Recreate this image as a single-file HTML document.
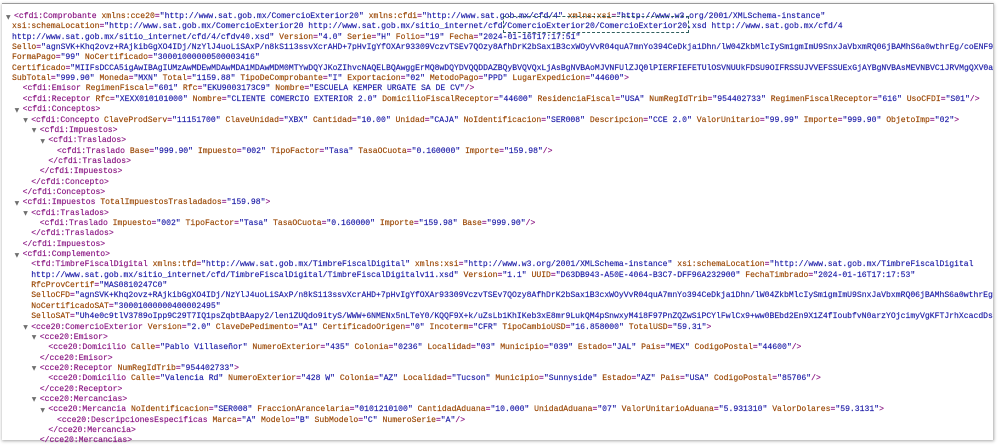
<!DOCTYPE html>
<html><head><meta charset="utf-8"><style>
html,body{margin:0;padding:0;background:#fff;width:1000px;height:445px;overflow:hidden}
#f{position:absolute;left:2px;top:3px;width:991px;height:436px;border-top:1px solid #9a9a9a;border-right:1px solid #c8c8c8;box-shadow:0 1px 3px rgba(0,0,0,.35);overflow:hidden;background:#fff}
.l{position:absolute;white-space:pre;font-family:"Liberation Mono",monospace;font-size:8.1px;line-height:10px;color:#881280;-webkit-text-stroke:0.15px currentColor}
.t{color:#881280}.a{color:#994500}.v{color:#1a1aa6}
.ar{position:absolute;font-size:6px;color:#6e6e6e;font-family:"DejaVu Sans",sans-serif;line-height:10px}
#db{position:absolute;left:503px;top:16px;width:184px;height:15px;border:1.5px dashed #2f5f5f}
</style></head><body><div id="f"></div>
<div id="c"></div>
<script>
var L=[
[0,1,'<span class=t>&lt;cfdi:Comprobante</span> <span class=a>xmlns:cce20</span>=<span class=v>"http://www.sat.gob.mx/ComercioExterior20"</span> <span class=a>xmlns:cfdi</span>=<span class=v>"http://www.sat.gob.mx/cfd/4"</span> <span class=a>xmlns:xsi</span>=<span class=v>"http://www.w3.org/2001/XMLSchema-instance"</span>'],
[0,2,'<span class=a>xsi:schemaLocation</span>=<span class=v>"http://www.sat.gob.mx/ComercioExterior20 http://www.sat.gob.mx/sitio_internet/cfd/ComercioExterior20/ComercioExterior20.xsd http://www.sat.gob.mx/cfd/4</span>'],
[0,2,'<span class=v>http://www.sat.gob.mx/sitio_internet/cfd/4/cfdv40.xsd"</span> <span class=a>Version</span>=<span class=v>"4.0"</span> <span class=a>Serie</span>=<span class=v>"H"</span> <span class=a>Folio</span>=<span class=v>"19"</span> <span class=a>Fecha</span>=<span class=v>"2024-01-16T17:17:51"</span>'],
[0,2,'<span class=a>Sello</span>=<span class=v>"agnSVK+Khq2ovz+RAjkibGgXO4IDj/NzYlJ4uoLiSAxP/n8kS113ssvXcrAHD+7pHvIgYfOXAr93309VczvTSEv7QOzy8AfhDrK2bSax1B3cxWOyVvR04quA7mnYo394CeDkja1Dhn/lW04ZkbMlcIySm1gmImU9SnxJaVbxmRQ06jBAMhS6a0wthrEg/coENF9N</span>'],
[0,2,'<span class=a>FormaPago</span>=<span class=v>"99"</span> <span class=a>NoCertificado</span>=<span class=v>"30001000000500003416"</span>'],
[0,2,'<span class=a>Certificado</span>=<span class=v>"MIIFsDCCA5igAwIBAgIUMzAwMDEwMDAwMDA1MDAwMDM0MTYwDQYJKoZIhvcNAQELBQAwggErMQ8wDQYDVQQDDAZBQyBVQVQxLjAsBgNVBAoMJVNFUlZJQ0lPIERFIEFETUlOSVNUUkFDSU9OIFRSSUJVVEFSSUExGjAYBgNVBAsMEVNBVC1JRVMgQXV0aG9</span>'],
[0,2,'<span class=a>SubTotal</span>=<span class=v>"999.90"</span> <span class=a>Moneda</span>=<span class=v>"MXN"</span> <span class=a>Total</span>=<span class=v>"1159.88"</span> <span class=a>TipoDeComprobante</span>=<span class=v>"I"</span> <span class=a>Exportacion</span>=<span class=v>"02"</span> <span class=a>MetodoPago</span>=<span class=v>"PPD"</span> <span class=a>LugarExpedicion</span>=<span class=v>"44600"</span>&gt;'],
[1,0,'&lt;cfdi:Emisor <span class=a>RegimenFiscal</span>=<span class=v>"601"</span> <span class=a>Rfc</span>=<span class=v>"EKU9003173C9"</span> <span class=a>Nombre</span>=<span class=v>"ESCUELA KEMPER URGATE SA DE CV"</span>/&gt;'],
[1,0,'&lt;cfdi:Receptor <span class=a>Rfc</span>=<span class=v>"XEXX010101000"</span> <span class=a>Nombre</span>=<span class=v>"CLIENTE COMERCIO EXTERIOR 2.0"</span> <span class=a>DomicilioFiscalReceptor</span>=<span class=v>"44600"</span> <span class=a>ResidenciaFiscal</span>=<span class=v>"USA"</span> <span class=a>NumRegIdTrib</span>=<span class=v>"954402733"</span> <span class=a>RegimenFiscalReceptor</span>=<span class=v>"616"</span> <span class=a>UsoCFDI</span>=<span class=v>"S01"</span>/&gt;'],
[1,1,'&lt;cfdi:Conceptos&gt;'],
[2,1,'&lt;cfdi:Concepto <span class=a>ClaveProdServ</span>=<span class=v>"11151700"</span> <span class=a>ClaveUnidad</span>=<span class=v>"XBX"</span> <span class=a>Cantidad</span>=<span class=v>"10.00"</span> <span class=a>Unidad</span>=<span class=v>"CAJA"</span> <span class=a>NoIdentificacion</span>=<span class=v>"SER008"</span> <span class=a>Descripcion</span>=<span class=v>"CCE 2.0"</span> <span class=a>ValorUnitario</span>=<span class=v>"99.99"</span> <span class=a>Importe</span>=<span class=v>"999.90"</span> <span class=a>ObjetoImp</span>=<span class=v>"02"</span>&gt;'],
[3,1,'&lt;cfdi:Impuestos&gt;'],
[4,1,'&lt;cfdi:Traslados&gt;'],
[5,0,'&lt;cfdi:Traslado <span class=a>Base</span>=<span class=v>"999.90"</span> <span class=a>Impuesto</span>=<span class=v>"002"</span> <span class=a>TipoFactor</span>=<span class=v>"Tasa"</span> <span class=a>TasaOCuota</span>=<span class=v>"0.160000"</span> <span class=a>Importe</span>=<span class=v>"159.98"</span>/&gt;'],
[4,0,'&lt;/cfdi:Traslados&gt;'],
[3,0,'&lt;/cfdi:Impuestos&gt;'],
[2,0,'&lt;/cfdi:Concepto&gt;'],
[1,0,'&lt;/cfdi:Conceptos&gt;'],
[1,1,'&lt;cfdi:Impuestos <span class=a>TotalImpuestosTrasladados</span>=<span class=v>"159.98"</span>&gt;'],
[2,1,'&lt;cfdi:Traslados&gt;'],
[3,0,'&lt;cfdi:Traslado <span class=a>Impuesto</span>=<span class=v>"002"</span> <span class=a>TipoFactor</span>=<span class=v>"Tasa"</span> <span class=a>TasaOCuota</span>=<span class=v>"0.160000"</span> <span class=a>Importe</span>=<span class=v>"159.98"</span> <span class=a>Base</span>=<span class=v>"999.90"</span>/&gt;'],
[2,0,'&lt;/cfdi:Traslados&gt;'],
[1,0,'&lt;/cfdi:Impuestos&gt;'],
[1,1,'&lt;cfdi:Complemento&gt;'],
[2,0,'&lt;tfd:TimbreFiscalDigital <span class=a>xmlns:tfd</span>=<span class=v>"http://www.sat.gob.mx/TimbreFiscalDigital"</span> <span class=a>xmlns:xsi</span>=<span class=v>"http://www.w3.org/2001/XMLSchema-instance"</span> <span class=a>xsi:schemaLocation</span>=<span class=v>"http://www.sat.gob.mx/TimbreFiscalDigital</span>'],
[2,2,'<span class=v>http://www.sat.gob.mx/sitio_internet/cfd/TimbreFiscalDigital/TimbreFiscalDigitalv11.xsd"</span> <span class=a>Version</span>=<span class=v>"1.1"</span> <span class=a>UUID</span>=<span class=v>"D63DB943-A50E-4064-B3C7-DFF96A232900"</span> <span class=a>FechaTimbrado</span>=<span class=v>"2024-01-16T17:17:53"</span>'],
[2,2,'<span class=a>RfcProvCertif</span>=<span class=v>"MAS0810247C0"</span>'],
[2,2,'<span class=a>SelloCFD</span>=<span class=v>"agnSVK+Khq2ovz+RAjkibGgXO4IDj/NzYlJ4uoLiSAxP/n8kS113ssvXcrAHD+7pHvIgYfOXAr93309VczvTSEv7QOzy8AfhDrK2bSax1B3cxWOyVvR04quA7mnYo394CeDkja1Dhn/lW04ZkbMlcIySm1gmImU9SnxJaVbxmRQ06jBAMhS6a0wthrEg/coENF9N</span>'],
[2,2,'<span class=a>NoCertificadoSAT</span>=<span class=v>"30001000000400002495"</span>'],
[2,2,'<span class=a>SelloSAT</span>=<span class=v>"Uh4e0c9tlV3789oIpp9C29T7IQ1psZqbtBAapy2/len1ZUQdo9ityS/WWW+6NMENx5nLTeY0/KQQF9X+k/uZsLb1KhIKeb3xE8mr9LukQM4pSnwxyM4i8F97PnZQZwSiPCYlFwlCx9+ww0BEbd2En9X1Z4fIoubfvN0arzYOjcimyVgKFTJrhXcacdDsV3</span>'],
[2,1,'&lt;cce20:ComercioExterior <span class=a>Version</span>=<span class=v>"2.0"</span> <span class=a>ClaveDePedimento</span>=<span class=v>"A1"</span> <span class=a>CertificadoOrigen</span>=<span class=v>"0"</span> <span class=a>Incoterm</span>=<span class=v>"CFR"</span> <span class=a>TipoCambioUSD</span>=<span class=v>"16.858000"</span> <span class=a>TotalUSD</span>=<span class=v>"59.31"</span>&gt;'],
[3,1,'&lt;cce20:Emisor&gt;'],
[4,0,'&lt;cce20:Domicilio <span class=a>Calle</span>=<span class=v>"Pablo Villaseñor"</span> <span class=a>NumeroExterior</span>=<span class=v>"435"</span> <span class=a>Colonia</span>=<span class=v>"0236"</span> <span class=a>Localidad</span>=<span class=v>"03"</span> <span class=a>Municipio</span>=<span class=v>"039"</span> <span class=a>Estado</span>=<span class=v>"JAL"</span> <span class=a>Pais</span>=<span class=v>"MEX"</span> <span class=a>CodigoPostal</span>=<span class=v>"44600"</span>/&gt;'],
[3,0,'&lt;/cce20:Emisor&gt;'],
[3,1,'&lt;cce20:Receptor <span class=a>NumRegIdTrib</span>=<span class=v>"954402733"</span>&gt;'],
[4,0,'&lt;cce20:Domicilio <span class=a>Calle</span>=<span class=v>"Valencia Rd"</span> <span class=a>NumeroExterior</span>=<span class=v>"428 W"</span> <span class=a>Colonia</span>=<span class=v>"AZ"</span> <span class=a>Localidad</span>=<span class=v>"Tucson"</span> <span class=a>Municipio</span>=<span class=v>"Sunnyside"</span> <span class=a>Estado</span>=<span class=v>"AZ"</span> <span class=a>Pais</span>=<span class=v>"USA"</span> <span class=a>CodigoPostal</span>=<span class=v>"85706"</span>/&gt;'],
[3,0,'&lt;/cce20:Receptor&gt;'],
[3,1,'&lt;cce20:Mercancias&gt;'],
[4,1,'&lt;cce20:Mercancia <span class=a>NoIdentificacion</span>=<span class=v>"SER008"</span> <span class=a>FraccionArancelaria</span>=<span class=v>"0101210100"</span> <span class=a>CantidadAduana</span>=<span class=v>"10.000"</span> <span class=a>UnidadAduana</span>=<span class=v>"07"</span> <span class=a>ValorUnitarioAduana</span>=<span class=v>"5.931310"</span> <span class=a>ValorDolares</span>=<span class=v>"59.3131"</span>&gt;'],
[5,0,'&lt;cce20:DescripcionesEspecificas <span class=a>Marca</span>=<span class=v>"A"</span> <span class=a>Modelo</span>=<span class=v>"B"</span> <span class=a>SubModelo</span>=<span class=v>"C"</span> <span class=a>NumeroSerie</span>=<span class=v>"A"</span>/&gt;'],
[4,0,'&lt;/cce20:Mercancia&gt;'],
[3,0,'&lt;/cce20:Mercancias&gt;']
];
(function(){
var h='';
for(var i=0;i<L.length;i++){var x=L[i];var ty=12+i*10.35;var lx=14+8.6*x[0];if(x[1]==2&&x[0]==0)lx=12;
if(x[1]==1)h+='<div class=ar style="left:'+(lx-8)+'px;top:'+(ty+0.5)+'px">▼</div>';
h+='<div class=l style="left:'+lx+'px;top:'+ty+'px;width:'+(993-lx)+'px;overflow:hidden">'+x[2]+'</div>';}
h+='<div id=db></div>';
document.getElementById('c').innerHTML=h;
})();
</script>
</body></html>
